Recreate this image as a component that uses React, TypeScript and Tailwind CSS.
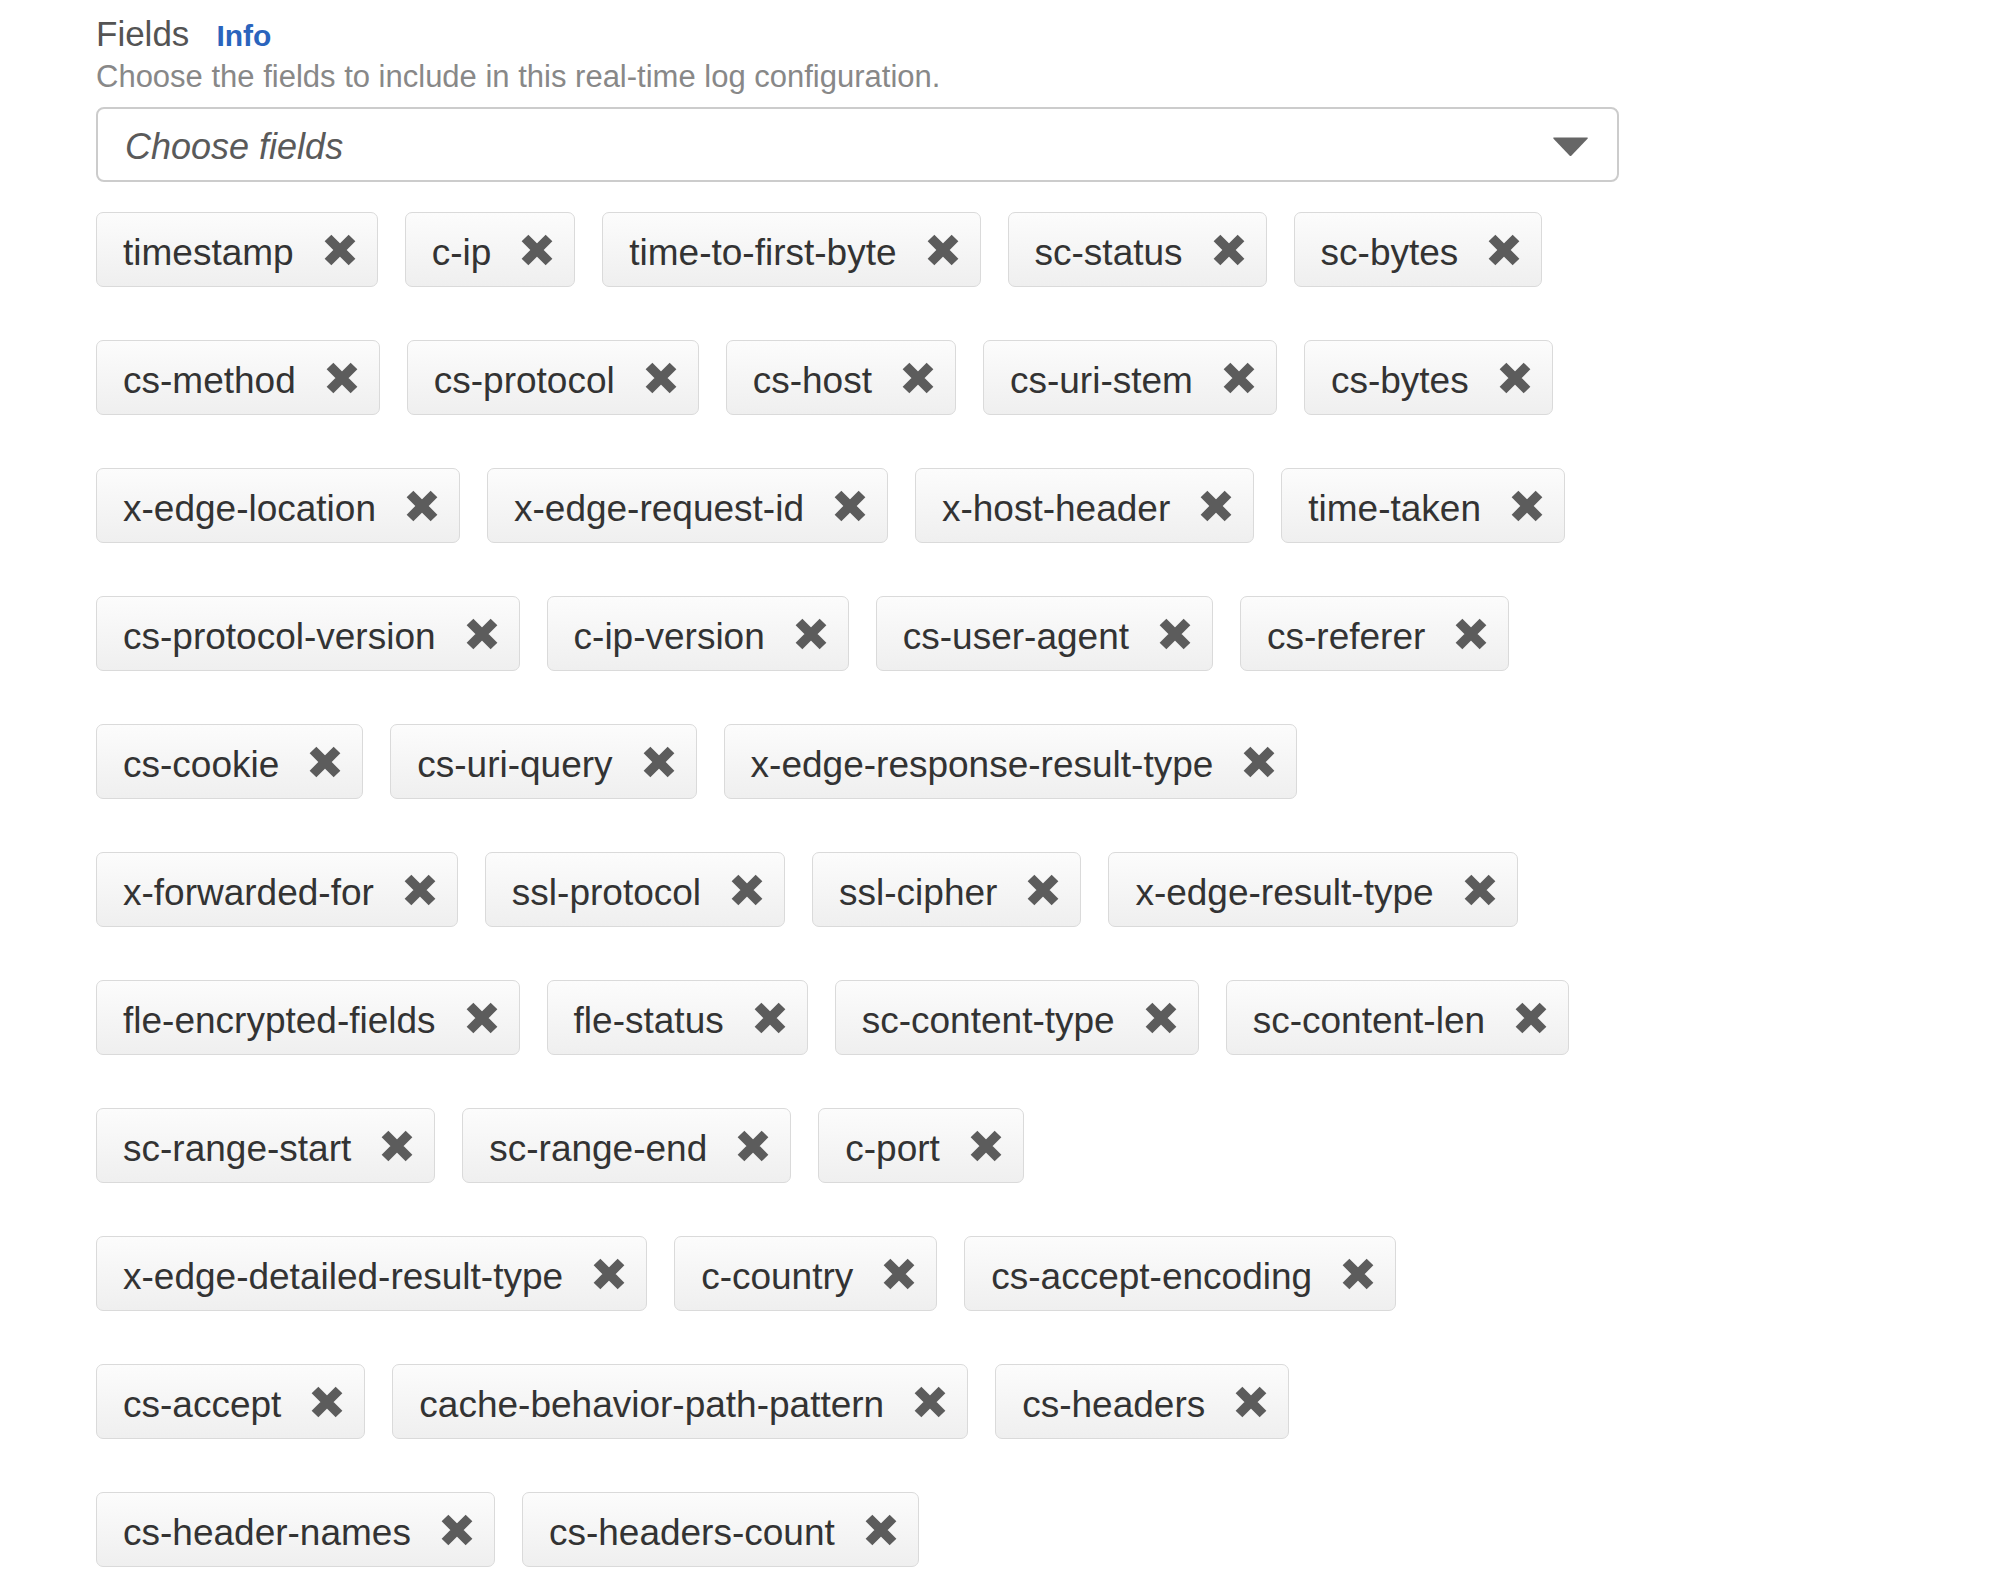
import React from 'react';

const rows: string[][] = [
    ['timestamp', 'c-ip', 'time-to-first-byte', 'sc-status', 'sc-bytes'],
    ['cs-method', 'cs-protocol', 'cs-host', 'cs-uri-stem', 'cs-bytes'],
    ['x-edge-location', 'x-edge-request-id', 'x-host-header', 'time-taken'],
    ['cs-protocol-version', 'c-ip-version', 'cs-user-agent', 'cs-referer'],
    ['cs-cookie', 'cs-uri-query', 'x-edge-response-result-type'],
    ['x-forwarded-for', 'ssl-protocol', 'ssl-cipher', 'x-edge-result-type'],
    ['fle-encrypted-fields', 'fle-status', 'sc-content-type', 'sc-content-len'],
    ['sc-range-start', 'sc-range-end', 'c-port'],
    ['x-edge-detailed-result-type', 'c-country', 'cs-accept-encoding'],
    ['cs-accept', 'cache-behavior-path-pattern', 'cs-headers'],
    ['cs-header-names', 'cs-headers-count'],
];

function CloseIcon() {
    return (
        <svg width="32" height="32" viewBox="0 0 32 32" className="shrink-0">
            <path
                d="M4 4 L28 28 M28 4 L4 28"
                stroke="#5c5c5c"
                strokeWidth="9.5"
                strokeLinecap="butt"
                fill="none"
            />
        </svg>
    );
}

function Token({ label }: { label: string }) {
    return (
        <div className="flex h-[75px] items-center rounded-[7px] border border-[#dadada] bg-gradient-to-b from-[#fcfcfc] to-[#efefef] pl-[26px] pr-[21px] pt-[7px]">
            <span className="text-[37px] leading-[44px] text-[#333333] whitespace-nowrap">{label}</span>
            <span className="ml-[30px] flex -mt-[6px]">
                <CloseIcon />
            </span>
        </div>
    );
}

export default function App() {
    return (
        <div
            className="min-h-screen bg-white pl-[96px] pt-[13px]"
            style={{ fontFamily: '"Liberation Sans", Arial, sans-serif' }}
        >
            <div className="flex items-baseline">
                <span className="text-[35px] leading-[42px] text-[#545454]">Fields</span>
                <span className="ml-[27px] text-[30px] leading-[42px] font-bold text-[#2a64bd]">Info</span>
            </div>
            <p className="mt-[2px] text-[31px] leading-[36px] text-[#888888]">
                Choose the fields to include in this real-time log configuration.
            </p>

            <div className="mt-[12px] flex h-[75px] w-[1523px] items-center justify-between rounded-[8px] border-2 border-[#cccccc] pl-[27px] pr-[28px]">
                <span className="pt-[4px] text-[36px] italic leading-[44px] text-[#5a5a5a]">Choose fields</span>
                <svg width="37" height="21" viewBox="0 0 37 21" className="mt-[3px]">
                    <path d="M2 1.5 H35 Q36.5 1.5 35.5 2.8 L19.5 19.5 Q18.5 20.5 17.5 19.5 L1.5 2.8 Q0.5 1.5 2 1.5 Z" fill="#666666" />
                </svg>
            </div>

            <div className="mt-[30px] flex flex-col gap-[53px] pb-[20px]">
                {rows.map((row, i) => (
                    <div key={i} className="flex gap-[27px]">
                        {row.map((label) => (
                            <Token key={label} label={label} />
                        ))}
                    </div>
                ))}
            </div>
        </div>
    );
}
